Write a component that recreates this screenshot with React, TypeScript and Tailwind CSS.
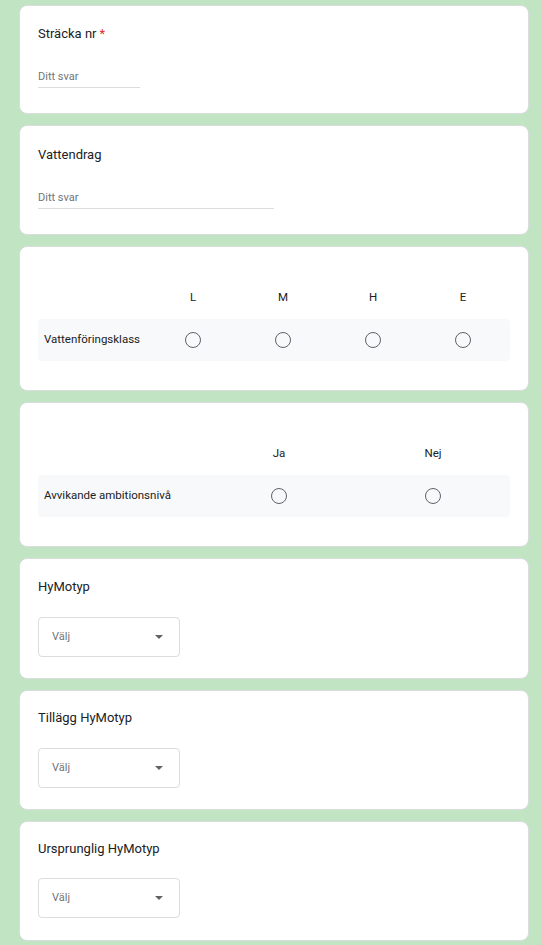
import React from 'react';

const Card = ({ className = '', children }: { className?: string; children: React.ReactNode }) => (
  <div className={`bg-white rounded-lg border border-[#dadce0] px-[18px] ${className}`}>{children}</div>
);

const Title = ({ text, required }: { text: string; required?: boolean }) => (
  <div className="text-[13px] leading-5 text-[#202124]">
    {text}
    {required && <span className="text-[#d93025] ml-[3px]">*</span>}
  </div>
);

const TextField = ({ width }: { width: string }) => (
  <div className={`${width} h-[21px] border-b border-[#dadce0] flex items-center`}>
    <span className="text-[11px] text-[#70757a]">Ditt svar</span>
  </div>
);

const Radio = () => <div className="w-4 h-4 rounded-full border-[1.5px] border-[#5f6368]" />;

const Grid = ({ label, cols, template }: { label: string; cols: string[]; template: string }) => (
  <div className="text-[11.5px] text-[#202124]">
    <div className={`grid ${template} h-[22px] items-center mb-[10px]`}>
      <div />
      {cols.map((c) => (
        <div key={c} className="text-center">{c}</div>
      ))}
    </div>
    <div className={`grid ${template} h-[42px] items-center bg-[#f8f9fa] rounded`}>
      <div className="pl-[6px]">{label}</div>
      {cols.map((c) => (
        <div key={c} className="flex justify-center">
          <Radio />
        </div>
      ))}
    </div>
  </div>
);

const Select = () => (
  <div className="w-[142px] h-10 border border-[#dadce0] rounded flex items-center justify-between pl-[13px] pr-4">
    <span className="text-[11px] text-[#70757a]">Välj</span>
    <svg width="8" height="4" viewBox="0 0 8 4">
      <path d="M0 0h8L4 4z" fill="#5f6368" />
    </svg>
  </div>
);

export default function App() {
  return (
    <div className="min-h-screen bg-[#c1e4c3] pt-[5px] pb-4 font-['Roboto',sans-serif]">
      <div className="ml-[19px] w-[510px] flex flex-col gap-[11px]">
        <Card className="h-[109px] pt-[18px]">
          <Title text="Sträcka nr" required />
          <div className="mt-[23px]">
            <TextField width="w-[102px]" />
          </div>
        </Card>

        <Card className="h-[110px] pt-[19px]">
          <Title text="Vattendrag" />
          <div className="mt-[23px]">
            <TextField width="w-[236px]" />
          </div>
        </Card>

        <Card className="h-[145px] pt-[40px]">
          <Grid label="Vattenföringsklass" cols={['L', 'M', 'H', 'E']} template="grid-cols-[110px_90px_90px_90px_90px]" />
        </Card>

        <Card className="h-[145px] pt-[40px]">
          <Grid label="Avvikande ambitionsnivå" cols={['Ja', 'Nej']} template="grid-cols-[164px_1fr_1fr]" />
        </Card>

        <Card className="h-[121px] pt-[18px]">
          <Title text="HyMotyp" />
          <div className="mt-[20px]">
            <Select />
          </div>
        </Card>

        <Card className="h-[120px] pt-[17px]">
          <Title text="Tillägg HyMotyp" />
          <div className="mt-[20px]">
            <Select />
          </div>
        </Card>

        <Card className="h-[120px] pt-[17px]">
          <Title text="Ursprunglig HyMotyp" />
          <div className="mt-[19px]">
            <Select />
          </div>
        </Card>
      </div>
    </div>
  );
}
